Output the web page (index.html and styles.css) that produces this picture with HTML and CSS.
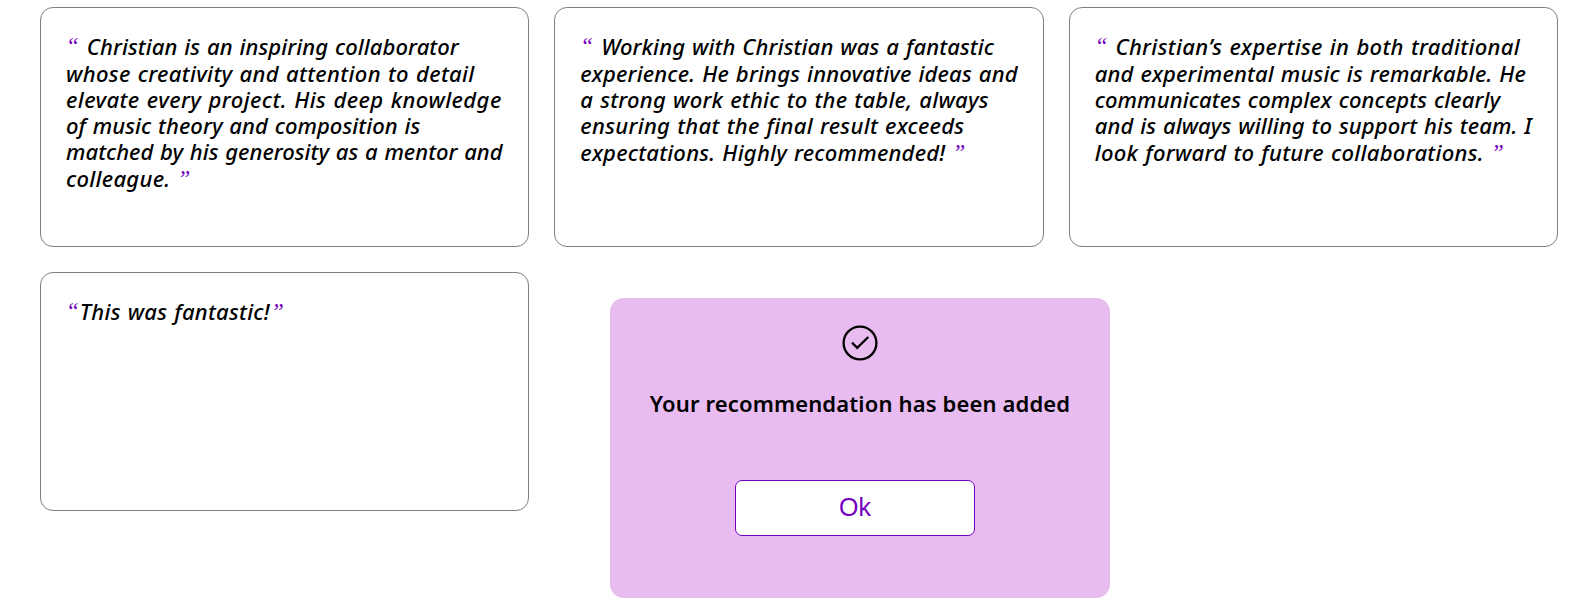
FILE: index.html
```html
<!DOCTYPE html>
<html lang="en">
<head>
<meta charset="utf-8">
<title>Recommendations</title>
<link rel="stylesheet" href="styles.css">
</head>
<body>
<main class="recommendations">
  <article class="card">
    <p class="line first"><span class="quote">“</span><span class="a1">Christian is an inspiring collaborator</span></p>
    <p class="line"><span class="a2">whose creativity and attention to detail</span></p>
    <p class="line"><span class="a3">elevate every project. His deep knowledge</span></p>
    <p class="line"><span class="a4">of music theory and composition is</span></p>
    <p class="line"><span class="a5">matched by his generosity as a mentor and</span></p>
    <p class="line last"><span class="a6">colleague.</span><span class="quote">”</span></p>
  </article>
  <article class="card">
    <p class="line first"><span class="quote">“</span><span class="b1">Working with Christian was a fantastic</span></p>
    <p class="line"><span class="b2">experience. He brings innovative ideas and</span></p>
    <p class="line"><span class="b3">a strong work ethic to the table, always</span></p>
    <p class="line"><span class="b4">ensuring that the final result exceeds</span></p>
    <p class="line last"><span class="b5">expectations. Highly recommended!</span><span class="quote">”</span></p>
  </article>
  <article class="card">
    <p class="line first"><span class="quote">“</span><span class="c1">Christian’s expertise in both traditional</span></p>
    <p class="line"><span class="c2">and experimental music is remarkable. He</span></p>
    <p class="line"><span class="c3">communicates complex concepts clearly</span></p>
    <p class="line"><span class="c4">and is always willing to support his team. I</span></p>
    <p class="line last"><span class="c5">look forward to future collaborations.</span><span class="quote">”</span></p>
  </article>
  <article class="card">
    <p class="line tight"><span class="quote">“</span><span class="d1">This was fantastic!</span><span class="quote">”</span></p>
  </article>
</main>
<section class="popup">
  <svg class="check" viewBox="0 0 36 36"><circle cx="18" cy="18" r="16.4"/><path d="M10 17.6l5.2 5.2L26.3 12"/></svg>
  <h3 class="message">Your recommendation has been added</h3>
  <button class="ok">Ok</button>
</section>
</body>
</html>
```
FILE: styles.css
```css
body { margin: 0; height: 609px; overflow: hidden; position: relative; background: #fff; color: #000; font-family: "Trebuchet MS", "Noto Sans", sans-serif; }
.recommendations { display: grid; grid-template-columns: repeat(3, minmax(0, 1fr)); grid-template-rows: 240px 239px; gap: 25px; width: 1518px; margin: 7px 0 0 40px; }
.card { box-sizing: border-box; border: 1px solid #808080; border-radius: 13px; padding: 25px; }
.line { margin: 0; height: 26px; line-height: 26px; font-size: 22px; font-style: italic; font-weight: 500; white-space: nowrap; word-spacing: 1px; }
.first { height: 27px; }
.last { padding-top: 1px; }
.quote { font-family: "Liberation Serif", serif; font-weight: 400; font-size: 23px; line-height: 0; vertical-align: 1px; color: #7300bd; }
.first .quote { margin-right: 8px; }
.last .quote { margin-left: 7px; }
.tight .quote { margin-right: 1px; }
.tight .d1 + .quote { margin-left: 1px; }
.a1 { letter-spacing: 0.08px; }
.a2 { letter-spacing: 0.35px; }
.a3 { letter-spacing: 0.44px; }
.a4 { letter-spacing: 0.06px; }
.a5 { letter-spacing: 0.02px; }
.a6 { letter-spacing: 0.3px; }
.b1 { letter-spacing: 0.13px; }
.b2 { letter-spacing: 0.18px; }
.b3 { letter-spacing: 0.26px; }
.b4 { letter-spacing: 0.3px; }
.b5 { letter-spacing: 0.24px; }
.c1 { letter-spacing: 0.34px; }
.c2 { letter-spacing: 0.17px; }
.c3 { letter-spacing: 0.11px; }
.c4 { letter-spacing: 0.1px; }
.c5 { letter-spacing: 0.3px; }
.d1 { letter-spacing: 0.27px; }
.popup { position: absolute; left: 610px; top: 298px; width: 500px; height: 300px; box-sizing: border-box; padding-top: 27px; display: flex; flex-direction: column; align-items: center; background: #e8bcf0; border-radius: 14px; }
.check { width: 36px; height: 36px; fill: none; stroke: #000; stroke-width: 2.3; }
.message { margin: 26px 0 0; font-size: 22px; font-weight: 600; line-height: 32px; letter-spacing: 0.14px; white-space: nowrap; }
.ok { width: 240px; height: 56px; margin: 61px 10px 0 0; padding: 0 0 1px; border: 1px solid #7300bd; border-radius: 7px; background: #fff; color: #7300bd; font: 25px "Liberation Sans", sans-serif; }
```
